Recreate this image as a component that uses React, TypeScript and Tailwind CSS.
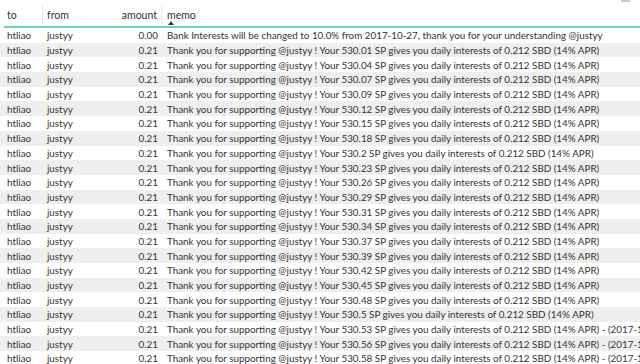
import React from "react";

const nums = ["530.01","530.04","530.07","530.09","530.12","530.15","530.18","530.2","530.23","530.26","530.29","530.31","530.34","530.37","530.39","530.42","530.45","530.48","530.5","530.53","530.56","530.58"];

type Row = { amount: string; memo: string };

const rows: Row[] = [
  { amount: "0.00", memo: "Bank Interests will be changed to 10.0% from 2017-10-27, thank you for your understanding @justyy" },
  ...nums.map((n, i) => ({
    amount: "0.21",
    memo:
      "Thank you for supporting @justyy ! Your " + n + " SP gives you daily interests of 0.212 SBD (14% APR)" + (i >= 19 ? " - (2017-10-27)" : ""),
  })),
];

export default function App() {
  return (
    <div
      className="w-[640px] h-[364px] overflow-hidden bg-white text-[#333333] text-[9.85px] relative"
      style={{ fontFamily: 'Lato, "Open Sans", sans-serif' }}
    >
      <div className="absolute right-[10px] top-0 w-[9px] h-[2px] bg-[#c8c8c8]" />
      <div className="h-[26px] flex items-end whitespace-nowrap text-[10.5px]">
        <div className="w-[43px] h-[21px] pl-[7px] border-r border-[#e8e8e8] flex items-center">to</div>
        <div className="w-[75px] h-[21px] pl-[4px] flex items-center">from</div>
        <div className="w-[44px] h-[21px] pr-[4px] border-r border-[#e8e8e8] flex items-center justify-end">amount</div>
        <div className="relative h-[21px] pl-[5px] flex items-center">
          memo
          <span className="absolute left-[6px] top-[16px] w-0 h-0 border-l-[3px] border-r-[3px] border-b-[4px] border-l-transparent border-r-transparent border-b-[#333333]" />
        </div>
      </div>
      <div className="ml-[4px] h-[2px] bg-[#6ad3c9]" />
      <div>
        {rows.map((r, i) => (
          <div
            key={i}
            className={"h-[14.7px] flex items-center whitespace-nowrap leading-[12px] overflow-hidden " + (i % 2 === 1 ? "bg-[#efefef]" : "bg-white")}
          >
            <div className="w-[47px] shrink-0 pl-[7px]">htliao</div>
            <div className="w-[71px] shrink-0">justyy</div>
            <div className="w-[40px] shrink-0 text-right">{r.amount}</div>
            <div className="pl-[9px]">{r.memo}</div>
          </div>
        ))}
      </div>
    </div>
  );
}
